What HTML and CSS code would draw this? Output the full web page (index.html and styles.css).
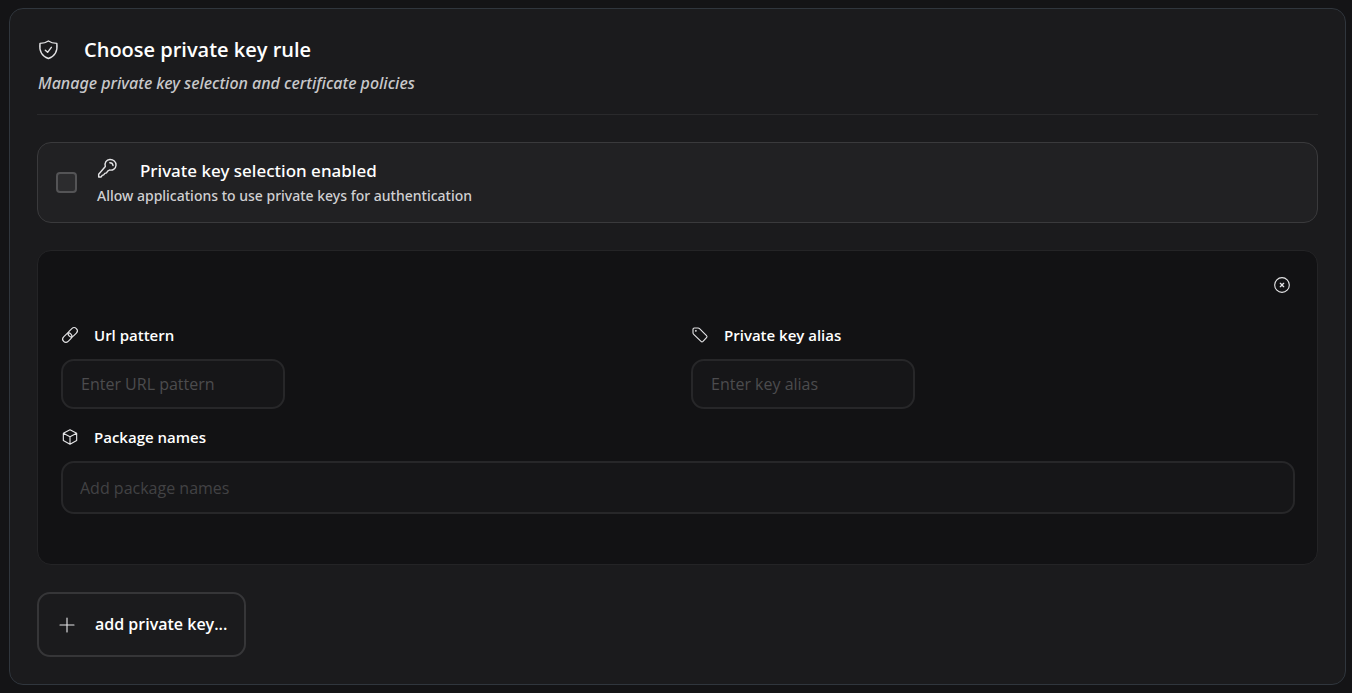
FILE: index.html
```html
<!DOCTYPE html>
<html lang="en">
<head>
    <meta charset="UTF-8">
    <meta name="viewport" content="width=device-width, initial-scale=1.0">
    <title>Choose private key rule</title>
    <link rel="stylesheet" href="styles.css">
</head>
<body>
    <main class="card">
        <header class="card-header">
            <h1 class="card-title">
                <svg class="icon icon-large" viewBox="0 0 24 24"><path d="M12.5 1.2 C9.5 3.4 6.5 4 2.4 4 C1.4 12 3.4 19 12.5 22.2 C21.6 19 23.6 12 22.6 4 C18.5 4 15.5 3.4 12.5 1.2 Z"/><path d="M8.8 12.4 L11.5 14.8 L16 8.8"/></svg>
                Choose private key rule
            </h1>
            <p class="card-subtitle">Manage private key selection and certificate policies</p>
        </header>

        <div class="option">
            <input type="checkbox" class="checkbox" id="key-enabled" aria-describedby="key-enabled-help">
            <div class="option-text">
                <label class="option-title" for="key-enabled">
                    <svg class="icon icon-large" viewBox="0 0 24 24"><path d="M10 11.5 C8.6 7 11.4 3.2 15.4 3 C19.6 2.8 23 5.8 22.8 9.8 C22.6 13.8 19 16.4 15 15.6 L12.8 17 L11.4 19 L9.4 19.6 L8 21.4 L6.2 22 L5 24 H2 V20.6 Z"/><path d="M15.4 6.8 C17.4 6.8 19 8.2 19.2 10.2"/></svg>
                    Private key selection enabled
                </label>
                <p class="option-help" id="key-enabled-help">Allow applications to use private keys for authentication</p>
            </div>
        </div>

        <section class="rule">
            <div class="rule-actions">
                <button type="button" class="remove-button" aria-label="Remove rule">
                    <svg class="icon" viewBox="0 0 24 24"><circle cx="12" cy="12" r="11"/><path class="thick" d="M9.5 9.5 L14.5 14.5 M14.5 9.5 L9.5 14.5"/></svg>
                </button>
            </div>
            <div class="fields">
                <div class="field">
                    <label class="field-label" for="url-pattern">
                        <svg class="icon" viewBox="0 0 24 24"><g transform="rotate(-45 12 12)"><rect x="-1.5" y="7.2" width="15.5" height="9.6" rx="4.8"/><rect x="10" y="7.2" width="15.5" height="9.6" rx="4.8"/></g></svg>
                        Url pattern
                    </label>
                    <input type="text" class="input" id="url-pattern" placeholder="Enter URL pattern">
                </div>
                <div class="field">
                    <label class="field-label" for="key-alias">
                        <svg class="icon" viewBox="0 0 24 24"><path d="M1.5 3.5 Q1.5 1.5 3.5 1.5 L9 1.5 Q10.3 1.5 11.3 2.5 L21.8 13 Q23.3 14.5 21.8 16 L16.5 21.6 Q15 23 13.5 21.6 L2.6 11 Q1.5 10 1.5 8.6 Z"/><circle class="dot" cx="5.8" cy="5.8" r="1.4"/></svg>
                        Private key alias
                    </label>
                    <input type="text" class="input" id="key-alias" placeholder="Enter key alias">
                </div>
                <div class="field field-wide">
                    <label class="field-label" for="package-names">
                        <svg class="icon" viewBox="0 0 24 24"><path d="M12 1.2 L22 6.4 V17.4 L12 22.8 L2 17.4 V6.4 Z M2 6.4 L12 11.8 L22 6.4 M12 11.8 V22.8"/></svg>
                        Package names
                    </label>
                    <input type="text" class="input input-wide" id="package-names" placeholder="Add package names">
                </div>
            </div>
        </section>

        <button type="button" class="add-button">
            <svg class="icon" viewBox="0 0 24 24"><path d="M12 1.5 V22.5 M1.5 12 H22.5"/></svg>
            add private key...
        </button>
    </main>
</body>
</html>
```
FILE: styles.css
```css
* {
    box-sizing: border-box;
}
body {
    font-family: "Open Sans", "Noto Sans", sans-serif;
    background-color: #141416;
    color: #ffffff;
    margin: 8px 6px 8px 9px;
}
.card {
    padding: 27px;
    background-color: #1b1b1d;
    border: 1px solid #30363d;
    border-radius: 14px;
}
.icon {
    width: 16px;
    height: 16px;
    flex-shrink: 0;
    fill: none;
    stroke: #e4e4e6;
    stroke-width: 1.7;
    stroke-linecap: round;
    stroke-linejoin: round;
    overflow: visible;
}
.icon-large {
    width: 20px;
    height: 20px;
}
.icon .thick {
    stroke-width: 2;
}
.icon .dot {
    fill: #e4e4e6;
    stroke: none;
}

/* header */
.card-header {
    padding-bottom: 18px;
    margin-bottom: 27px;
    border-bottom: 1px solid #2a2a2c;
}
.card-title {
    display: flex;
    align-items: center;
    gap: 26px;
    margin: 0 0 6px;
    padding-left: 1px;
    font-size: 20px;
    line-height: 28px;
    font-weight: 600;
}
.card-subtitle {
    margin: 0;
    padding-left: 1px;
    font-family: "Noto Sans", "Open Sans", sans-serif;
    font-size: 16px;
    line-height: 26px;
    font-style: italic;
    font-weight: 500;
    color: #c8c8ca;
}

/* enable option */
.option {
    display: flex;
    align-items: center;
    gap: 20px;
    padding: 14px 18px 15px;
    margin-bottom: 27px;
    background-color: #212123;
    border: 1px solid #3a3a3c;
    border-radius: 14px;
}
.checkbox {
    appearance: none;
    width: 21px;
    height: 21px;
    margin: 0;
    background-color: #2c2c2e;
    border: 2px solid #545456;
    border-radius: 4px;
    cursor: pointer;
}
.checkbox:checked {
    background-color: #8e8e93;
}
.option-title {
    display: flex;
    gap: 23px;
    font-family: "Noto Sans", "Open Sans", sans-serif;
    font-size: 17px;
    line-height: 28px;
    font-weight: 500;
}
.option-help {
    margin: 0;
    font-family: "Noto Sans", "Open Sans", sans-serif;
    font-size: 14px;
    line-height: 22px;
    font-weight: 500;
    color: #d0d0d2;
}

/* rule */
.rule {
    padding: 22px 22px 50px 23px;
    margin-bottom: 27px;
    background-color: #121214;
    border: 1px solid #242426;
    border-radius: 14px;
}
.rule-actions {
    display: flex;
    justify-content: flex-end;
    margin-bottom: 26px;
}
.remove-button {
    display: flex;
    padding: 4px 5px 4px 4px;
    background: none;
    border: none;
    cursor: pointer;
}
.fields {
    display: grid;
    grid-template-columns: 1fr 1fr;
    gap: 16px 26px;
}
.field-wide {
    grid-column: 1 / -1;
}
.field-label {
    display: flex;
    align-items: center;
    gap: 16px;
    margin-bottom: 12px;
    padding-left: 1px;
    font-size: 15px;
    line-height: 24px;
    font-weight: 600;
}
.input {
    display: block;
    width: 224px;
    height: 50px;
    padding: 0 18px;
    font-family: inherit;
    font-size: 16px;
    font-weight: 500;
    color: #ffffff;
    background-color: #161618;
    border: 2px solid #272729;
    border-radius: 13px;
}
.input::placeholder {
    color: #4c4c4e;
}
.input-wide {
    width: 100%;
    height: 53px;
    padding: 0 17px;
    font-weight: 400;
}
.input-wide::placeholder {
    color: #424244;
}
.add-button {
    display: flex;
    align-items: center;
    gap: 20px;
    padding: 18px 17px 18px 20px;
    font-family: inherit;
    font-size: 16px;
    line-height: 25px;
    font-weight: 600;
    color: #ffffff;
    background: none;
    border: 2px solid #363638;
    border-radius: 13px;
    cursor: pointer;
}
```
